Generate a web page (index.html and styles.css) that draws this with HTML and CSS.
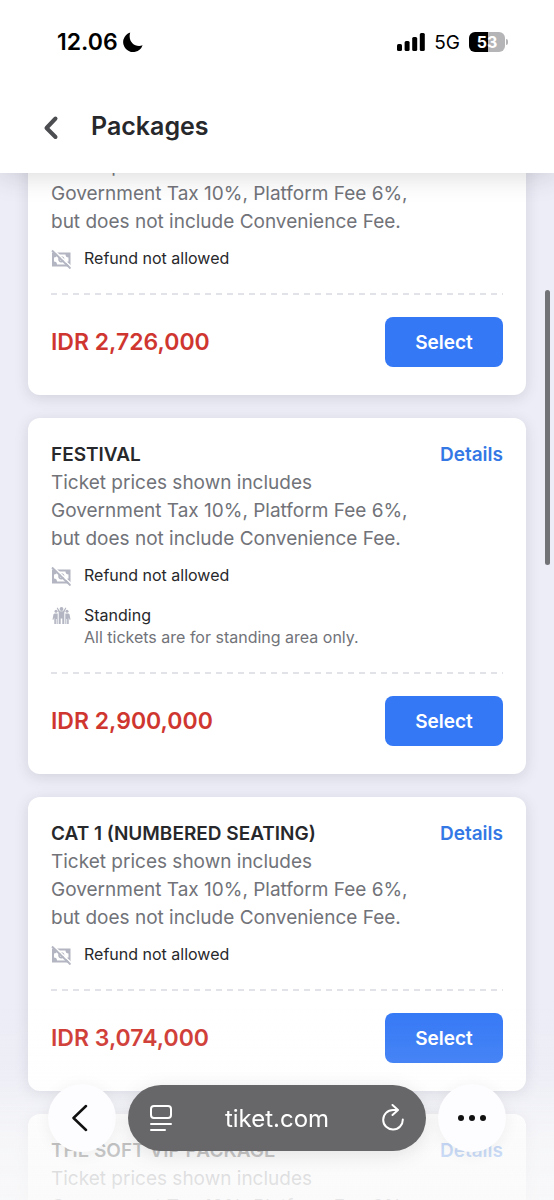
FILE: index.html
```html
<!DOCTYPE html>
<html lang="en">
<head>
<meta charset="utf-8">
<meta name="viewport" content="width=device-width, initial-scale=1">
<title>Packages</title>
<link rel="stylesheet" href="styles.css">
</head>
<body>
<svg class="defs" aria-hidden="true">
  <symbol id="no-refund" viewBox="0 0 20 20">
    <path fill="currentColor" fill-rule="evenodd" d="M1 3.500h18.500v14H1zM6 5.500a3 3 0 0 1-3 3v4a3 3 0 0 1 3 3h8.500a3 3 0 0 1 3-3v-4a3 3 0 0 1-3-3z"/>
    <circle cx="10.300" cy="10.300" r="2.300" fill="none" stroke="currentColor" stroke-width="1.600"/>
    <path stroke="#fff" stroke-width="1.600" d="M2.500.8l17.500 16.700"/>
    <path stroke="currentColor" stroke-width="1.900" d="M1 1.500l18.500 18"/>
  </symbol>
  <symbol id="standing" viewBox="0 0 20 20">
    <g fill="currentColor">
      <circle cx="10.500" cy="3" r="1.900"/><circle cx="5" cy="5.300" r="1.500"/><circle cx="16" cy="5.300" r="1.500"/>
      <path d="M6.500 1.500l2.500 3.700h3l2.500-3.700.8.600-2 4.400V18h-2v-5.500h-1.600V18h-2V6.500l-2-4.400z"/>
      <path d="M3.500 7.400h3.200V18H5.600v-5h-.7v5H3.300v-6.500L2.300 14l-.8-.5 1-5.200zM17.500 7.400h-3.200V18h1.100v-5h.7v5h1.600v-6.500l1 2.500.8-.5-1-5.200z"/>
    </g>
  </symbol>
</svg>

<header class="top">
  <div class="status">
    <div class="status-group">
      <span class="clock">12.06</span>
      <svg class="moon" viewBox="0 0 20 20"><path d="M7.200.5A10 10 0 1 0 19.600 13.300C12 16 4.500 9.500 7.200.5z"/></svg>
    </div>
    <div class="status-group status-right">
      <svg class="signal" viewBox="0 0 28 18"><rect y="11" width="5" height="7" rx="1.500"/><rect x="7.600" y="8" width="5" height="10" rx="1.500"/><rect x="15.200" y="4" width="5" height="14" rx="1.500"/><rect x="22.800" width="5" height="18" rx="1.500"/></svg>
      <span class="network">5G</span>
      <span class="battery"><span class="battery-level">53</span></span>
    </div>
  </div>
  <div class="titlebar">
    <button class="back" aria-label="Back"><svg viewBox="0 0 18 26"><path d="M12.500 4.500L3.500 14l9 9"/></svg></button>
    <h1 class="page-title">Packages</h1>
  </div>
</header>

<main class="content">
  <div class="list">
    <article class="card">
      <p class="desc">Ticket prices shown includes Government Tax 10%, Platform Fee 6%, but does not include Convenience Fee.</p>
      <ul class="facts"><li class="fact"><svg class="fact-icon"><use href="#no-refund"/></svg><span>Refund not allowed</span></li></ul>
      <div class="buy"><strong class="price">IDR 2,726,000</strong><button class="select">Select</button></div>
    </article>
    <article class="card">
      <div class="card-head"><h2 class="name">FESTIVAL</h2><a class="details" href="#">Details</a></div>
      <p class="desc">Ticket prices shown includes Government Tax 10%, Platform Fee 6%, but does not include Convenience Fee.</p>
      <ul class="facts">
        <li class="fact"><svg class="fact-icon"><use href="#no-refund"/></svg><span>Refund not allowed</span></li>
        <li class="fact"><svg class="fact-icon"><use href="#standing"/></svg><span>Standing<small class="note">All tickets are for standing area only.</small></span></li>
      </ul>
      <div class="buy"><strong class="price">IDR 2,900,000</strong><button class="select">Select</button></div>
    </article>
    <article class="card">
      <div class="card-head"><h2 class="name">CAT 1 (NUMBERED SEATING)</h2><a class="details" href="#">Details</a></div>
      <p class="desc">Ticket prices shown includes Government Tax 10%, Platform Fee 6%, but does not include Convenience Fee.</p>
      <ul class="facts"><li class="fact"><svg class="fact-icon"><use href="#no-refund"/></svg><span>Refund not allowed</span></li></ul>
      <div class="buy"><strong class="price">IDR 3,074,000</strong><button class="select">Select</button></div>
    </article>
    <article class="card">
      <div class="card-head"><h2 class="name">THE SOFT VIP PACKAGE</h2><a class="details" href="#">Details</a></div>
      <p class="desc">Ticket prices shown includes Government Tax 10%, Platform Fee 6%, but does not include Convenience Fee.</p>
    </article>
  </div>
</main>

<div class="scrollbar"></div>

<nav class="browser">
  <button class="round" aria-label="Previous page"><svg class="nav-back" viewBox="0 0 20 30"><path d="M14 3L1.500 15 14 27"/></svg></button>
  <div class="address">
    <button class="tool" aria-label="Page menu"><svg class="tool-icon" viewBox="0 0 26 28"><rect x="3" y="2" width="20" height="12" rx="3"/><path d="M3 20h20M3 26h14"/></svg></button>
    <span class="domain">tiket.com</span>
    <button class="tool" aria-label="Reload"><svg class="tool-icon" viewBox="0 0 26 28"><path d="M17.500 6H13A9.800 9.800 0 1 0 22.800 15.500M12.500 1l5.500 5-5.500 5"/></svg></button>
  </div>
  <button class="round" aria-label="More"><svg class="dots" viewBox="0 0 30 8"><circle cx="4" cy="4" r="3"/><circle cx="15" cy="4" r="3"/><circle cx="26" cy="4" r="3"/></svg></button>
</nav>
</body>
</html>
```

FILE: styles.css
```css
* {
  box-sizing: border-box;
}

body {
  margin: 0;
  height: 100vh;
  overflow: hidden;
  display: flex;
  flex-direction: column;
  background: #ecedf6;
  color: #27282b;
  font-family: Inter, "Liberation Sans", sans-serif;
}

button {
  border: 0;
  padding: 0;
  background: none;
  font: inherit;
  cursor: pointer;
}

h1, h2, p, ul {
  margin: 0;
  padding: 0;
}

svg {
  display: block;
  flex: none;
}

.defs {
  position: absolute;
  width: 0;
  height: 0;
}

.top {
  position: relative;
  z-index: 1;
  flex: none;
  background: #fff;
  box-shadow: 0 4px 24px rgba(60, 60, 70, 0.18);
}

.status {
  display: flex;
  justify-content: space-between;
  padding: 28px 49px 0 57px;
  color: #000;
}

.status-group {
  display: flex;
  align-items: center;
  height: 28px;
  gap: 5px;
}

.status-right {
  gap: 9px;
}

.clock {
  font-size: 23px;
  font-weight: 600;
}

.moon {
  width: 20px;
  height: 20px;
}

.signal {
  width: 28px;
  height: 18px;
}

.network {
  font-size: 19px;
}

.battery {
  position: relative;
  width: 36px;
  height: 20px;
  border-radius: 6px;
  background: linear-gradient(90deg, #000 53%, #b5b5b7 53%);
  color: #fff;
  font-size: 16px;
  font-weight: 700;
  line-height: 20px;
  text-align: center;
}

.battery::after {
  content: "";
  position: absolute;
  top: 7px;
  right: -3px;
  width: 2px;
  height: 6px;
  border-radius: 0 2px 2px 0;
  background: #b5b5b7;
}

.titlebar {
  display: flex;
  align-items: center;
  gap: 30px;
  padding: 53px 43px 29px;
}

.back svg {
  width: 18px;
  height: 26px;
  fill: none;
  stroke: #4c4d51;
  stroke-width: 4;
  stroke-linecap: round;
  stroke-linejoin: round;
}

.page-title {
  font-size: 25px;
  line-height: 35px;
  font-weight: 600;
}

.content {
  flex: 1;
  min-height: 0;
  overflow: hidden;
}

.list {
  display: flex;
  flex-direction: column;
  gap: 23px;
  margin-top: -44px;
  padding: 0 28px;
}

.card {
  padding: 23px 23px 28px;
  border-radius: 12px;
  background: #fff;
  box-shadow: 0 3px 14px rgba(60, 60, 80, 0.15);
}

.card-head {
  display: flex;
  justify-content: space-between;
  line-height: 28px;
}

.name {
  font-size: 19px;
  font-weight: 600;
}

.details {
  color: #3478e5;
  font-size: 19px;
  font-weight: 600;
  text-decoration: none;
}

.desc {
  max-width: 372px;
  color: #717379;
  font-size: 19px;
  line-height: 28px;
}

.facts {
  display: flex;
  flex-direction: column;
  gap: 18px;
  padding: 11px 0 24px;
  list-style: none;
}

.fact {
  display: flex;
  gap: 13px;
  font-size: 16px;
  line-height: 22px;
}

.fact-icon {
  width: 20px;
  height: 20px;
  margin-top: 2px;
  color: #b3b6c2;
}

.note {
  display: block;
  color: #717379;
  font-size: 16px;
}

.buy {
  display: flex;
  align-items: center;
  justify-content: space-between;
  padding-top: 24px;
  background: repeating-linear-gradient(90deg, #e2e3e8 0 6px, #fff 6px 11px) top / 100% 2px no-repeat;
}

.price {
  color: #cf3630;
  font-size: 23px;
  font-weight: 600;
}

.select {
  width: 118px;
  height: 50px;
  border-radius: 8px;
  background: #3478f6;
  color: #fff;
  font-size: 19px;
  font-weight: 600;
}

.scrollbar {
  position: fixed;
  z-index: 2;
  top: 290px;
  right: 4px;
  width: 5px;
  height: 275px;
  border-radius: 3px;
  background: #727377;
}

.browser {
  position: fixed;
  z-index: 3;
  right: 0;
  bottom: 0;
  left: 0;
  display: flex;
  align-items: center;
  gap: 12px;
  padding: 84px 48px 48px;
  background: linear-gradient(rgba(250, 250, 250, 0), rgba(250, 250, 250, 0.1) 35%, rgba(250, 250, 250, 0.72) 70%, rgba(250, 250, 250, 0.85));
}

.round {
  display: flex;
  align-items: center;
  justify-content: center;
  flex: none;
  width: 68px;
  height: 68px;
  border-radius: 50%;
  background: #fdfdff;
  box-shadow: 0 2px 16px rgba(0, 0, 0, 0.06);
}

.nav-back {
  width: 20px;
  height: 30px;
  fill: none;
  stroke: #111;
  stroke-width: 2.5;
  stroke-linecap: round;
  stroke-linejoin: round;
}

.dots {
  width: 30px;
  height: 8px;
  fill: #111;
}

.address {
  flex: 1;
  display: flex;
  align-items: center;
  justify-content: space-between;
  height: 66px;
  padding: 0 20px;
  border-radius: 33px;
  background: #676769;
  box-shadow: 0 4px 20px rgba(0, 0, 0, 0.1);
  color: #fff;
}

.tool-icon {
  width: 26px;
  height: 28px;
  fill: none;
  stroke: #fff;
  stroke-width: 2;
  stroke-linecap: round;
  stroke-linejoin: round;
}

.domain {
  font-size: 24px;
}
```
